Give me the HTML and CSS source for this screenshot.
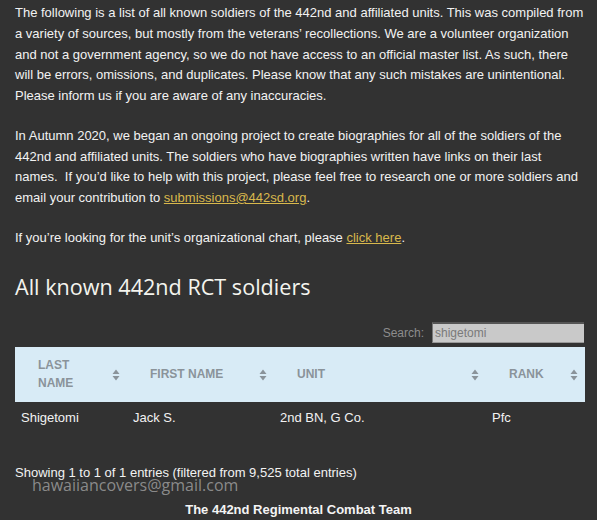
FILE: index.html
```html
<!DOCTYPE html>
<html>
<head>
<meta charset="utf-8">
<link rel="stylesheet" href="styles.css">
</head>
<body>
<div class="page">
  <p class="intro">The following is a list of all known soldiers of the 442nd and affiliated units. This was compiled from a variety of sources, but mostly from the veterans’ recollections. We are a volunteer organization and not a government agency, so we do not have access to an official master list. As such, there will be errors, omissions, and duplicates. Please know that any such mistakes are unintentional. Please inform us if you are aware of any inaccuracies.</p>
  <p class="intro">In Autumn 2020, we began an ongoing project to create biographies for all of the soldiers of the 442nd and affiliated units. The soldiers who have biographies written have links on their last names.&nbsp; If you’d like to help with this project, please feel free to research one or more soldiers and email your contribution to <a href="#">submissions@442sd.org</a>.</p>
  <p class="intro">If you’re looking for the unit’s organizational chart, please <a href="#">click here</a>.</p>

  <h2 class="title">All known 442nd RCT soldiers</h2>

  <div class="search-row">
    <label class="search-label">Search:</label>
    <input class="search-input" type="text" value="shigetomi">
  </div>

  <table class="grid">
    <colgroup>
      <col class="c1"><col class="c2"><col class="c3"><col class="c4">
    </colgroup>
    <thead>
      <tr>
        <th><span class="th-in"><span>LAST<br>NAME</span><svg class="sort" viewBox="0 0 8 12" width="8" height="12"><path d="M4 0.5 L7.5 5 H0.5 Z M4 11.5 L0.5 7 H7.5 Z" fill="#8a939a"/></svg></span></th>
        <th><span class="th-in"><span>FIRST NAME</span><svg class="sort" viewBox="0 0 8 12" width="8" height="12"><path d="M4 0.5 L7.5 5 H0.5 Z M4 11.5 L0.5 7 H7.5 Z" fill="#8a939a"/></svg></span></th>
        <th><span class="th-in"><span>UNIT</span><svg class="sort" viewBox="0 0 8 12" width="8" height="12"><path d="M4 0.5 L7.5 5 H0.5 Z M4 11.5 L0.5 7 H7.5 Z" fill="#8a939a"/></svg></span></th>
        <th><span class="th-in"><span>RANK</span><svg class="sort" viewBox="0 0 8 12" width="8" height="12"><path d="M4 0.5 L7.5 5 H0.5 Z M4 11.5 L0.5 7 H7.5 Z" fill="#8a939a"/></svg></span></th>
      </tr>
    </thead>
    <tbody>
      <tr>
        <td>Shigetomi</td>
        <td>Jack S.</td>
        <td>2nd BN, G Co.</td>
        <td>Pfc</td>
      </tr>
    </tbody>
  </table>

  <div class="info-wrap">
    <p class="info">Showing 1 to 1 of 1 entries (filtered from 9,525 total entries)</p>
    <span class="watermark">hawaiiancovers@gmail.com</span>
  </div>

  <p class="footer">The 442nd Regimental Combat Team</p>
</div>
</body>
</html>
```

FILE: styles.css
```css
html, body {
  margin: 0;
  padding: 0;
  background: #323232;
}
body {
  font-family: "Liberation Sans", Arial, sans-serif;
  color: #f2f2f2;
  font-size: 13px;
}
.page {
  padding: 3px 12px 0 15px;
}
.intro {
  margin: 0 0 19px 0;
  line-height: 20.75px;
  font-size: 13px;
  margin-right: -3px;
}
.intro a {
  color: #d8b84c;
  text-decoration: underline;
}
.title {
  font-family: "Open Sans", sans-serif;
  font-weight: 400;
  font-size: 21.6px;
  color: #f4f4ee;
  margin: 23px 0 0 0;
  line-height: 30px;
}
.search-row {
  display: flex;
  justify-content: flex-end;
  align-items: center;
  margin-top: 20px;
  padding-right: 1px;
  height: 22px;
}
.search-label {
  color: #8d8d8d;
  font-size: 12px;
  margin-right: 8px;
}
.search-input {
  width: 152px;
  height: 21px;
  box-sizing: border-box;
  background: #c9c9c9;
  border: none;
  border-top: 2px solid #555;
  border-left: 1px solid #777;
  border-bottom: 1px solid #999;
  padding: 0 2px;
  color: #7a7a7a;
  font-family: "Liberation Sans", Arial, sans-serif;
  font-size: 12px;
  margin: 0;
}
.grid {
  width: 570px;
  border-collapse: collapse;
  table-layout: fixed;
  margin-top: 3px;
}
.c1 { width: 112px; }
.c2 { width: 147px; }
.c3 { width: 212px; }
.c4 { width: 99px; }
.grid thead tr {
  background: #d8ebf6;
}
.grid th {
  height: 55px;
  padding: 0 7px 0 23px;
  text-align: left;
  font-size: 12px;
  font-weight: 700;
  color: #8a939a;
  line-height: 18px;
  vertical-align: middle;
}
.th-in {
  display: flex;
  justify-content: space-between;
  align-items: center;
}
.sort {
  flex: none;
  margin-top: 1px;
}
.grid td {
  padding: 0 6px;
  height: 32px;
  font-size: 13px;
  color: #f2f2f2;
  vertical-align: middle;
}
.info-wrap {
  position: relative;
  margin-top: 31px;
}
.info {
  margin: 0;
  font-size: 13px;
  line-height: 16px;
}
.watermark {
  position: absolute;
  left: 17px;
  top: 11px;
  font-family: "Open Sans", sans-serif;
  font-size: 16px;
  line-height: 18px;
  color: rgba(150, 150, 150, 0.9);
}
.footer {
  margin: 21px 0 0 0;
  text-align: center;
  font-weight: 700;
  font-size: 13px;
  line-height: 16px;
  color: #f4f4f4;
  padding-right: 3px;
}
```
